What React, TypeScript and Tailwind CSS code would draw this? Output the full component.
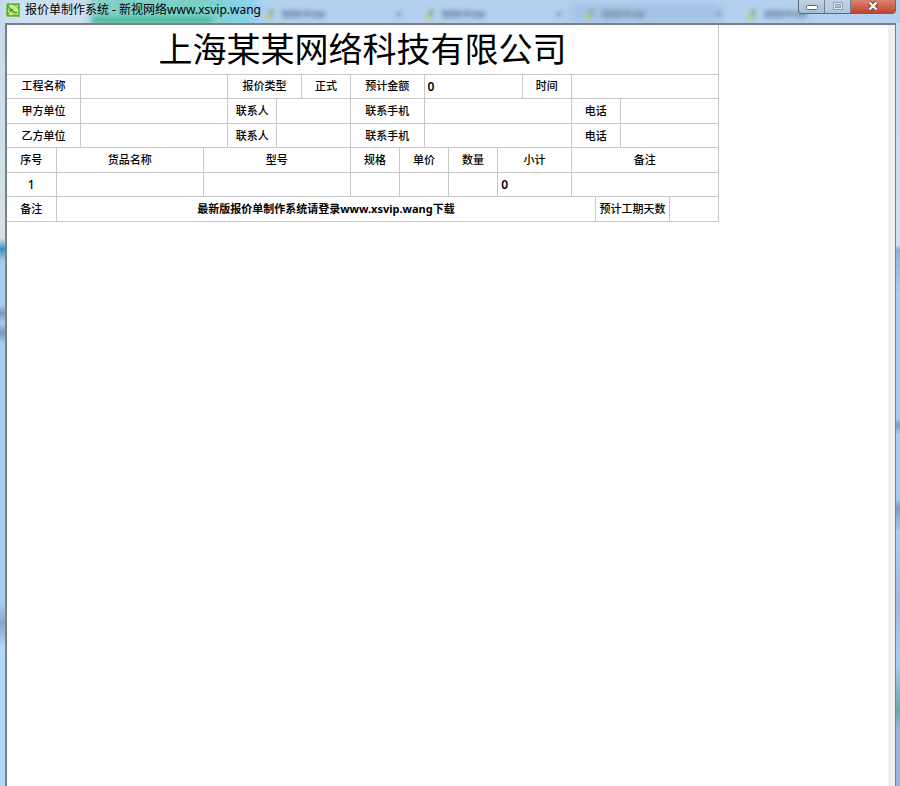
import { useId, type ReactNode } from 'react'

const CELL = 'border border-[#c8c8c8] p-0'
const COLUMNS = Array.from({ length: 29 }, (_, i) => i)
const BACK_TABS = [265, 425, 585, 747]

/** Blurred browser tabs seen through the glass title bar. */
function GlassBackdrop() {
  return (
    <svg className="absolute inset-0 h-full w-full" aria-hidden="true">
      <defs>
        <filter id="soft" x="-20%" y="-80%" width="140%" height="260%">
          <feGaussianBlur stdDeviation="2" />
        </filter>
        <filter id="wide" x="-20%" y="-80%" width="140%" height="260%">
          <feGaussianBlur stdDeviation="6 3" />
        </filter>
        <linearGradient id="tint">
          <stop offset="0" stopColor="#84cfc4" />
          <stop offset="0.65" stopColor="#78cfc4" />
          <stop offset="1" stopColor="#8ad2f2" />
        </linearGradient>
      </defs>
      <rect x="0" y="-4" width="92" height="30" fill="#cfe0ef" filter="url(#wide)" />
      <rect x="92" y="-4" width="166" height="30" fill="url(#tint)" filter="url(#wide)" />
      <rect x="92" y="17" width="120" height="6" fill="#4dbb9e" filter="url(#soft)" />
      <rect x="570" y="4" width="150" height="18" fill="#a3c3e6" filter="url(#wide)" />
      {BACK_TABS.map((x) => (
        <g key={x} filter="url(#soft)">
          <path d={`M${x + 1} 19l4-10h4l-2 10z`} fill="#8fb39c" />
          <path d={`M${x} 15h5v5h-5z`} fill="#c3cf8e" />
          <path d={`M${x + 17} 10h20v8h-20zM${x + 38} 10h8v7h-8zM${x + 47} 11h13v7h-13z`} fill="#86a2c0" />
          {x < 700 && <path d={`M${x + 131} 11h6v6h-6z`} fill="#92acc9" />}
        </g>
      ))}
    </svg>
  )
}

function AppIcon() {
  return (
    <svg width="14" height="14" viewBox="0 0 14 14" aria-hidden="true">
      <rect width="14" height="14" rx="1" fill="#4fae3c" />
      <path d="M2 2h10v10H2z" fill="#a5d84a" />
      <path d="M2 4c3 0 5 1 10 7M4 2c3 1 6 3 8 6" fill="none" stroke="#f3f9b4" strokeWidth="1.3" />
      <path d="M2 3c2 3 5 6 9 7M2 11c1-3 3-4 5-5" fill="none" stroke="#279a3c" strokeWidth="1.3" />
      <path d="M2 8l4 4" stroke="#dff09a" strokeWidth="1.2" />
      <rect x="0.5" y="0.5" width="13" height="13" fill="none" stroke="#9fcf8f" strokeDasharray="1.5 1" />
    </svg>
  )
}

function WindowButtons() {
  return (
    <div className="relative flex h-[14px] w-[98px] shrink-0 overflow-hidden rounded-b-[4px] border border-t-0 border-[#5b6878]">
      <button
        type="button"
        aria-label="最小化"
        className="flex w-[26px] items-center justify-center border-r border-[#6f7f92] bg-linear-to-b from-[#c3d3e5] to-[#a7bcd3]"
      >
        <svg width="12" height="12" viewBox="0 0 12 12" aria-hidden="true">
          <rect x="0.5" y="4.5" width="11" height="4" rx="1" fill="#fff" stroke="#5a6472" />
        </svg>
      </button>
      <button
        type="button"
        aria-label="最大化"
        className="flex w-[26px] items-center justify-center border-r border-[#6f7f92] bg-linear-to-b from-[#c3d3e5] to-[#b0c5dc]"
      >
        <svg width="10" height="12" viewBox="0 0 10 12" aria-hidden="true">
          <rect x="1.5" y="2.5" width="7" height="5" fill="#b5c5d8" stroke="#8c9bb0" strokeWidth="3" />
          <rect x="1.5" y="2.5" width="7" height="5" fill="none" stroke="#e8eef5" />
        </svg>
      </button>
      <button
        type="button"
        aria-label="关闭"
        className="flex flex-1 items-center justify-center bg-linear-to-b from-[#d98373] to-[#c14128]"
      >
        <svg width="12" height="12" viewBox="0 0 12 12" aria-hidden="true">
          <path d="M2.5 1.5l7 7M9.5 1.5l-7 7" stroke="#6a3a3a" strokeWidth="4" />
          <path d="M2.5 1.5l7 7M9.5 1.5l-7 7" stroke="#fff" strokeWidth="2.4" />
        </svg>
      </button>
    </div>
  )
}

function Head({ span, children }: { span: number; children: ReactNode }) {
  return (
    <th colSpan={span} scope="col" className={`${CELL} font-medium`}>
      {children}
    </th>
  )
}

function Entry({ span, label, value = '' }: { span: number; label: string; value?: string }) {
  return (
    <td colSpan={span} className={CELL}>
      <input
        aria-label={label}
        defaultValue={value}
        className="block h-5 w-full bg-transparent px-[3px] text-[12px] font-semibold outline-none"
      />
    </td>
  )
}

/** A caption cell followed by the cell of its text box. */
function Field({ span, entry, label, value = '' }: { span: number; entry: number; label: string; value?: string }) {
  const id = useId()
  return (
    <>
      <td colSpan={span} className={`${CELL} text-center whitespace-nowrap`}>
        <label htmlFor={id}>{label}</label>
      </td>
      <td colSpan={entry} className={CELL}>
        <input
          id={id}
          defaultValue={value}
          className="block h-5 w-full bg-transparent px-[3px] text-[12px] font-semibold outline-none"
        />
      </td>
    </>
  )
}

function PartyRow({ party }: { party: string }) {
  return (
    <tr className="h-6">
      <Field span={3} entry={6} label={party} />
      <Field span={2} entry={3} label="联系人" />
      <Field span={3} entry={6} label="联系手机" />
      <Field span={2} entry={4} label="电话" />
    </tr>
  )
}

function QuoteSheet() {
  const typeId = useId()
  return (
    <table className="h-[197px] w-full max-w-[712px] table-fixed border-collapse text-[11px] leading-4 font-medium text-black [&_tr>*:first-child]:border-l-0">
      <colgroup>
        {COLUMNS.map((c) => (
          <col key={c} />
        ))}
      </colgroup>
      <tbody>
        <tr className="h-12">
          <td colSpan={29} className="border-r border-[#c8c8c8] p-0 text-center">
            <h1 className="text-[34px] leading-[46px] font-normal">上海某某网络科技有限公司</h1>
          </td>
        </tr>
        <tr className="h-6">
          <Field span={3} entry={6} label="工程名称" />
          <td colSpan={3} className={`${CELL} text-center`}>
            <label htmlFor={typeId}>报价类型</label>
          </td>
          <td colSpan={2} className={CELL}>
            <select
              id={typeId}
              className="block h-5 w-full appearance-none bg-transparent text-center font-medium outline-none"
            >
              <option>正式</option>
            </select>
          </td>
          <Field span={3} entry={4} label="预计金额" value="0" />
          <Field span={2} entry={6} label="时间" />
        </tr>
        <PartyRow party="甲方单位" />
        <PartyRow party="乙方单位" />
        <tr className="h-6">
          <Head span={2}>序号</Head>
          <Head span={6}>货品名称</Head>
          <Head span={6}>型号</Head>
          <Head span={2}>规格</Head>
          <Head span={2}>单价</Head>
          <Head span={2}>数量</Head>
          <Head span={3}>小计</Head>
          <Head span={6}>备注</Head>
        </tr>
        <tr className="h-6">
          <td colSpan={2} className={`${CELL} text-center text-[12px]`}>
            1
          </td>
          <Entry span={6} label="货品名称" />
          <Entry span={6} label="型号" />
          <Entry span={2} label="规格" />
          <Entry span={2} label="单价" />
          <Entry span={2} label="数量" />
          <Entry span={3} label="小计" value="0" />
          <Entry span={6} label="备注" />
        </tr>
        <tr className="h-6">
          <td colSpan={2} className={`${CELL} text-center`}>
            备注
          </td>
          <td colSpan={22} className={`${CELL} text-center font-bold`}>
            最新版报价单制作系统请登录www.xsvip.wang下载
          </td>
          <Field span={3} entry={2} label="预计工期天数" />
        </tr>
      </tbody>
    </table>
  )
}

export default function App() {
  return (
    <div className="flex min-h-screen flex-col bg-[#b3d0ef] font-['Noto_Sans','Noto_Sans_CJK_SC',sans-serif]">
      <header className="relative flex h-[23px] items-start overflow-hidden">
        <GlassBackdrop />
        <div className="relative flex h-[19px] flex-1 items-center gap-[5px] pl-[6px]">
          <AppIcon />
          <span className="text-[12px] leading-4 text-black">报价单制作系统 - 新视网络www.xsvip.wang</span>
        </div>
        <div className="relative pr-1">
          <WindowButtons />
        </div>
      </header>
      <div className="flex flex-1">
        <div className="w-[5px] bg-[linear-gradient(#c6dcf0_0px,#d5e3e6_215px,#3f8fc6_226px,#a9cdf0_238px,#a9cdf0_282px,#7d97b4_290px,#a9cdf0_300px,#7d97b4_310px,#a9cdf0_320px,#a9cdf0_580px,#8aa5c4_600px,#b5d8f8_625px,#b5d8f8_100%)]" />
        <div className="flex flex-1 border-t-2 border-r border-l-2 border-[#7b8087] bg-white">
          <main className="flex-1">
            <QuoteSheet />
          </main>
          <div className="w-[7px] bg-[#f0efee]" />
        </div>
        <div className="w-1 bg-[linear-gradient(#c3daf0_0px,#d0e2f2_222px,#8fb0dc_226px,#a9cdf2_270px,#a9cdf2_395px,#7f9cc6_402px,#a9cdf2_412px,#a9cdf2_475px,#7f9cc6_485px,#a9cdf2_510px,#9dbce0_580px,#a9cdf2_640px,#6aa9a8_688px,#98b4de_705px,#98b4de_100%)]" />
      </div>
    </div>
  )
}
